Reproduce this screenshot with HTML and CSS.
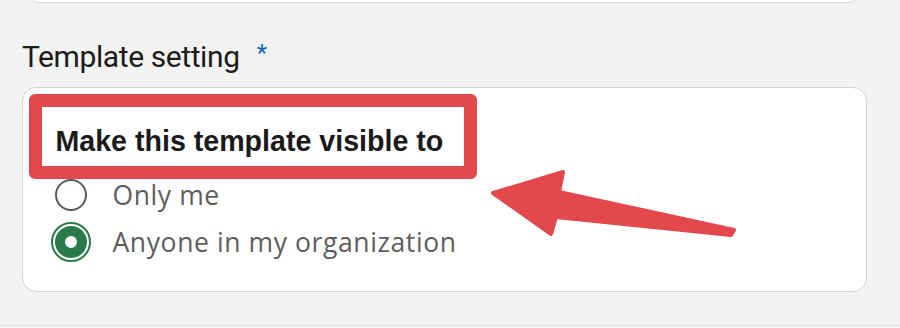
FILE: index.html
```html
<!DOCTYPE html>
<html lang="en">
<head>
    <meta charset="UTF-8">
    <meta name="viewport" content="width=device-width, initial-scale=1.0">
    <title>Template setting</title>
    <link rel="stylesheet" href="styles.css">
</head>
<body>

    <div class="page">
        <!-- bottom of the previous field, cut off by the screenshot -->
        <div class="prev-field"></div>

        <div class="field-label">Template setting <span class="required">*</span></div>

        <div class="setting-card">
            <div class="highlight">
                <div class="card-title">Make this template visible to</div>
            </div>
            <div class="options">
                <label class="option">
                    <span class="radio"></span>
                    <span class="option-text">Only me</span>
                </label>
                <label class="option">
                    <span class="radio checked"></span>
                    <span class="option-text">Anyone in my organization</span>
                </label>
            </div>
        </div>

        <div class="footer-line"></div>

        <!-- annotation arrow -->
        <svg class="arrow" width="270" height="90" viewBox="0 0 270 90">
            <polygon points="13,33 83,12 79,32 254,70 251,75 76,57 71,74"
                     fill="#e2484c" stroke="#e2484c" stroke-width="4" stroke-linejoin="round"/>
        </svg>
    </div>

</body>
</html>
```

FILE: styles.css
```css
* {
    box-sizing: border-box;
    margin: 0;
    padding: 0;
}

body {
    background-color: #f3f3f1;
    font-family: "Liberation Sans", Arial, sans-serif;
    overflow: hidden;
}

.page {
    position: relative;
    display: flow-root;
    width: 900px;
    height: 328px;
}

.prev-field {
    margin-top: -20px;
    margin-left: 28px;
    width: 831px;
    height: 23px;
    background-color: #fff;
    border: 1.5px solid #d6d6d6;
    border-radius: 0 0 10px 10px;
}

.field-label {
    margin: 31px 0 11px 22px;
    font-family: Roboto, "Liberation Sans", sans-serif;
    font-size: 30px;
    line-height: 38px;
    letter-spacing: -0.4px;
    color: #1c1c1c;
}

.required {
    margin-left: 10px;
    color: #0a66c2;
    font-size: 24px;
    vertical-align: 6px;
}

.setting-card {
    margin-left: 22px;
    width: 845px;
    height: 205px;
    background-color: #fff;
    border: 1.5px solid #d4d4d4;
    border-radius: 14px;
    padding: 5.5px 0 0 5.5px;
}

.highlight {
    width: 448px;
    height: 85px;
    border: 13px solid #e2484c;
    border-radius: 6px;
    padding: 17px 0 0 14px;
}

.card-title {
    font-size: 28.6px;
    line-height: 34px;
    font-weight: bold;
    color: #1a1a1a;
    white-space: nowrap;
}

.options {
    display: flex;
    flex-direction: column;
    gap: 15px;
    margin-left: 26px;
}

.option {
    display: flex;
    align-items: center;
    gap: 26px;
    height: 32px;
}

.radio {
    width: 32px;
    height: 32px;
    border-radius: 50%;
    border: 2.5px solid #595959;
    background-color: #fff;
    flex-shrink: 0;
}

.radio.checked {
    border: 10.5px solid #2b7a4b;
    outline: 2px solid #2b7a4b;
    outline-offset: 2px;
}

.option-text {
    font-family: "Open Sans", sans-serif;
    font-size: 26.5px;
    line-height: 32px;
    letter-spacing: 0.6px;
    color: #5e5e5e;
    white-space: nowrap;
}

.footer-line {
    position: absolute;
    left: 0;
    right: 0;
    top: 325px;
    height: 3px;
    border-top: 1.5px solid #dcdcdc;
}

.arrow {
    position: absolute;
    left: 480px;
    top: 160px;
}
```
